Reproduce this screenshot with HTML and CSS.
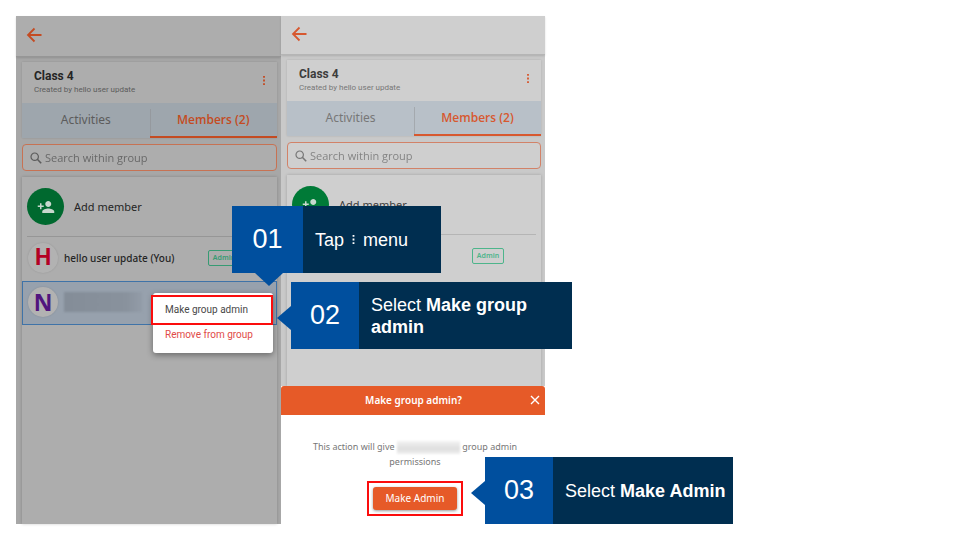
FILE: index.html
```html
<!DOCTYPE html>
<html lang="en">
<head>
<meta charset="utf-8">
<meta name="viewport" content="width=device-width, initial-scale=1">
<title>Make group admin</title>
<link rel="stylesheet" href="styles.css">
</head>
<body>
<svg class="sprite" aria-hidden="true">
  <symbol id="back" viewBox="0 0 16 16"><path d="M15 8H2M8 1.500L1.500 8L8 14.500" fill="none" stroke="currentColor" stroke-width="1.800"/></symbol>
  <symbol id="dots" viewBox="0 0 4 12"><path d="M1 1h2v2H1zM1 5h2v2H1zM1 9h2v2H1z" fill="currentColor"/></symbol>
  <symbol id="search" viewBox="0 0 12 12"><circle cx="4.700" cy="4.700" r="3.700" fill="none" stroke="currentColor" stroke-width="1.200"/><path d="M7.300 7.300L11.200 11.200" stroke="currentColor" stroke-width="1.600"/></symbol>
  <symbol id="add-person" viewBox="0 0 24 24"><path d="M15 12c2.210 0 4-1.790 4-4s-1.790-4-4-4-4 1.790-4 4 1.790 4 4 4zm-9-2V7H4v3H1v2h3v3h2v-3h3v-2H6zm9 4c-2.670 0-8 1.340-8 4v2h16v-2c0-2.660-5.330-4-8-4z" fill="currentColor"/></symbol>
  <symbol id="close" viewBox="0 0 10 10"><path d="M1 1l8 8M9 1L1 9" stroke="currentColor" stroke-width="1.400"/></symbol>
</svg>
<main class="board">
  <section class="phone phone-dim" aria-label="Members list">
    <header class="bar"><button class="icon-btn" aria-label="Back"><svg class="i-back"><use href="#back"/></svg></button></header>
    <div class="content">
      <div class="group">
        <div class="group-head">
          <div><h2 class="title">Class 4</h2><p class="sub">Created by hello user update</p></div>
          <button class="icon-btn" aria-label="Group menu"><svg class="i-dots"><use href="#dots"/></svg></button>
        </div>
        <div class="tabs"><button class="tab">Activities</button><button class="tab tab-on">Members (2)</button></div>
      </div>
      <label class="search"><svg class="i-search"><use href="#search"/></svg><input type="search" placeholder="Search within group" aria-label="Search within group"></label>
      <div class="list">
        <button class="add"><span class="add-icon"><svg class="i-add"><use href="#add-person"/></svg></span>Add member</button>
        <div class="row"><span class="avatar avatar-h">H</span><span>hello user update (You)</span><span class="badge">Admin</span></div>
        <div class="row row-on">
          <span class="avatar avatar-n">N</span><span class="hidden-name"></span>
          <div class="menu">
            <button class="menu-item menu-marked">Make group admin</button>
            <button class="menu-item menu-danger">Remove from group</button>
          </div>
        </div>
      </div>
    </div>
  </section>

  <section class="phone phone-light" aria-label="Confirmation">
    <header class="bar"><button class="icon-btn" aria-label="Back"><svg class="i-back"><use href="#back"/></svg></button></header>
    <div class="content">
      <div class="group">
        <div class="group-head">
          <div><h2 class="title">Class 4</h2><p class="sub">Created by hello user update</p></div>
          <button class="icon-btn" aria-label="Group menu"><svg class="i-dots"><use href="#dots"/></svg></button>
        </div>
        <div class="tabs"><button class="tab">Activities</button><button class="tab tab-on">Members (2)</button></div>
      </div>
      <label class="search"><svg class="i-search"><use href="#search"/></svg><input type="search" placeholder="Search within group" aria-label="Search within group"></label>
      <div class="list">
        <button class="add"><span class="add-icon"><svg class="i-add"><use href="#add-person"/></svg></span>Add member</button>
        <div class="row"><span class="avatar avatar-h">H</span><span>hello user update (You)</span><span class="badge">Admin</span></div>
      </div>
    </div>
    <div class="sheet">
      <div class="sheet-head"><h3 class="sheet-title">Make group admin?</h3><button class="icon-btn" aria-label="Close"><svg class="i-close"><use href="#close"/></svg></button></div>
      <div class="sheet-body">
        <p class="sheet-text">This action will give <span class="hidden-word"></span> group admin permissions</p>
        <div class="marked"><button class="confirm">Make Admin</button></div>
      </div>
    </div>
  </section>

  <div class="step step-1"><span class="num">01</span><p class="say">Tap <svg class="i-inline"><use href="#dots"/></svg> menu</p></div>
  <div class="step step-2"><span class="num">02</span><p class="say">Select <b>Make group admin</b></p></div>
  <div class="step step-3"><span class="num">03</span><p class="say">Select <b>Make Admin</b></p></div>
</main>
</body>
</html>
```
FILE: styles.css
```css
* { box-sizing: border-box; }
body { margin: 0; background: #fff; font-family: "Noto Sans", "Open Sans", sans-serif; }
h2, h3, p { margin: 0; }
button { border: 0; padding: 0; background: none; font: inherit; color: inherit; }
svg { display: block; }
.sprite { position: absolute; width: 0; height: 0; }

.board {
  position: relative;
  display: grid;
  grid-template-columns: minmax(265px, 28%) minmax(264px, 28%);
  min-height: 100vh;
  padding: 16px;
}
.phone { display: flex; flex-direction: column; min-width: 0; color: var(--ink); background: var(--back); }
.phone-dim {
  --back: #a7a7a7; --card: #adadad; --tabs: #9ea6ad; --ink: #252525; --soft: #5c5c5c;
  --accent: #c44b22; --edge: #c77253; --line: #969696; --avatar: #b2b2b2; --green: #00692f; --admin: #369b73;
  --bar: 41px;
  --red: #b40024;
}
.phone-light {
  --back: #c9c9c9; --card: #cfcfcf; --tabs: #b8c0c8; --ink: #3d3d3d; --soft: #777;
  --accent: #d7582f; --edge: #d28268; --line: #b5b5b5; --avatar: #d4d4d4; --green: #007a37; --admin: #4db58b;
  --bar: 39px;
  --red: #c8002c;
}
.bar { display: flex; align-items: center; height: var(--bar); padding: 0 0 2px 10px; color: var(--accent); background: var(--card); border-bottom: 1px solid var(--line); box-shadow: 0 1px 2px #0002; }
.i-back { width: 17px; height: 16px; }
.content { display: flex; flex: 1; flex-direction: column; gap: 6px; padding: 5px 4px 0 6px; }
.group { background: var(--card); box-shadow: 0 0 2px #0002; }
.group-head { display: flex; align-items: center; justify-content: space-between; height: 41px; padding: 0 9px 0 12px; }
.icon-btn { color: inherit; }
.group-head .icon-btn { color: var(--accent); padding-bottom: 4px; }
.i-dots { width: 8px; height: 11px; }
.title { font: 700 12px/15px Roboto, sans-serif; }
.sub { font: 8px/12px Roboto, sans-serif; color: var(--soft); }
.tabs { display: grid; grid-template-columns: 1fr 1fr; height: 35px; background: var(--tabs); }
.tab { position: relative; border-bottom: 2px solid transparent; font-size: 12px; color: var(--soft); }
.tab-on { border-color: var(--accent); color: var(--accent); font-family: "Open Sans", sans-serif; font-weight: 600; }
.tab-on::before { content: ""; position: absolute; left: 0; top: 6px; bottom: 0; width: 1px; background: #8886; }
.search { display: flex; align-items: center; gap: 3px; height: 27px; padding: 0 7px; border: 1px solid var(--edge); border-radius: 4px; background: var(--card); color: var(--soft); }
.i-search { flex: none; width: 12px; height: 12px; }
.search input { flex: 1; min-width: 0; padding: 0; border: 0; outline: 0; background: none; font: 11px/16px "Open Sans", sans-serif; color: inherit; }
.search input::placeholder { color: inherit; opacity: .85; }
.list { flex: 1; background: var(--card); box-shadow: 0 0 3px #0003; }
.add { display: flex; align-items: center; gap: 10px; width: calc(100% - 10px); height: 60px; margin-left: 5px; border-bottom: 1px solid var(--line); font-size: 11px; }
.add-icon { display: grid; place-items: center; width: 37px; height: 37px; border-radius: 50%; background: var(--green); color: #c8d8ce; }
.i-add { width: 18px; height: 18px; }
.row { display: flex; align-items: center; gap: 6px; position: relative; height: 44px; padding: 0 37px 3px 6px; font-size: 10px; font-weight: 500; }
.avatar { display: grid; place-items: center; width: 30px; height: 30px; border-radius: 50%; background: var(--avatar); box-shadow: 0 0 2px #0002; font: 700 23px/30px "Noto Sans", sans-serif; }
.avatar-h { color: var(--red); font-family: Roboto, sans-serif; }
.avatar-n { color: #51157e; }
.badge { margin-left: auto; width: 32px; border: 1px solid var(--admin); border-radius: 2px; font-size: 7px; line-height: 14px; text-align: center; font-weight: 600; color: var(--admin); }
.row-on { padding-left: 5px; background: #97a1ad; border: 1px solid #3f73a8; }
.hidden-name { width: 78px; height: 20px; background: linear-gradient(90deg, #848d98, #89929d 80%, #939ca8); filter: blur(1px); }
.menu { position: absolute; top: 11px; right: 3px; display: flex; flex-direction: column; width: 120px; padding: 2px 0 8px; border-radius: 3px; background: #fff; box-shadow: 0 2px 6px #0006; }
.menu-item { height: 20px; padding-left: 12px; text-align: left; font: 10px/14px Roboto, sans-serif; color: #484848; }
.menu-marked { height: 30px; margin-left: -2px; border: 2px solid #fb0d0d; }
.menu-danger { color: #df4b48; }

.sheet { position: relative; background: #fff; }
.sheet-head { display: grid; grid-template-columns: 1fr auto; align-items: center; height: 29px; padding-right: 5px; border-radius: 3px 3px 0 0; background: #e65a28; color: #fff; }
.sheet-title { padding-left: 16px; text-align: center; font-size: 10px; line-height: 14px; font-weight: 600; }
.i-close { width: 10px; height: 10px; }
.sheet-body { display: flex; flex-direction: column; align-items: center; gap: 12px; padding: 24px 22px 8px 26px; }
.sheet-text { text-align: center; font-size: 9px; line-height: 15px; color: #777; }
.hidden-word { display: inline-block; width: 63px; height: 13px; vertical-align: middle; background: linear-gradient(#f3f3f3, #dedede 60%, #f0f0f0); filter: blur(1px); }
.marked { padding: 4px; border: 2px solid #fb0d0d; }
.confirm { display: block; width: 84px; height: 23px; border-radius: 3px; background: #e65a28; box-shadow: 0 1px 3px #0006; color: #fff; font-size: 10px; line-height: 23px; }

.step { position: absolute; display: grid; grid-template-columns: 68px 1fr; min-height: 67px; background: #002e50; color: #fff; font-family: "Liberation Sans", Arial, sans-serif; }
.num { display: grid; place-items: center; background: #004f9e; font-size: 27px; }
.say { align-self: center; padding: 0 4px 0 12px; font-size: 18px; line-height: 22px; }
.i-inline { display: inline-block; width: 9px; height: 11px; vertical-align: 1px; }
.step::before { content: ""; position: absolute; background: #004f9e; }
.step-1 { left: 232px; top: 206px; width: 209px; grid-template-columns: 71px 1fr; }
.step-1::before { left: 23px; top: 100%; width: 28px; height: 13px; clip-path: polygon(0 0, 100% 0, 50% 100%); }
.step-2 { left: 291px; top: 282px; width: 281px; }
.step-3 { left: 485px; top: 457px; width: 248px; }
.step-2::before, .step-3::before { right: 100%; top: 24px; width: 14px; height: 24px; clip-path: polygon(100% 0, 100% 100%, 0 50%); }
```
